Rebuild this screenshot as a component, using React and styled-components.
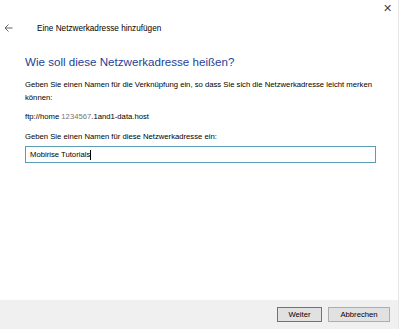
import React from "react";
import styled, { createGlobalStyle } from "styled-components";

const Global = createGlobalStyle`
  html, body { margin: 0; padding: 0; background: #fff; }
  body { font-family: "Liberation Sans", Arial, sans-serif; }
`;

const Window = styled.div`
  width: 399px;
  height: 329px;
  display: flex;
  flex-direction: column;
  background: #fff;
  box-sizing: border-box;
  border-right: 1px solid #e6e6e6;
`;

const TopBar = styled.div`
  height: 16px;
  display: flex;
  justify-content: flex-end;
  padding: 2px 6px 0 0;
`;

const Close = styled.span`
  font-size: 11px;
  color: #444;
  line-height: 12px;
`;

const Header = styled.div`
  display: flex;
  align-items: center;
  padding: 0 0 0 4px;
  height: 20px;
`;

const Back = styled.svg`
  width: 9px;
  height: 8px;
  margin-right: 24px;
`;

const Caption = styled.span`
  font-size: 8.2px;
  color: #000;
`;

const Body = styled.div`
  flex: 1;
  padding: 17px 22px 0 25px;
`;

const Heading = styled.h1`
  margin: 0 0 9px;
  font-weight: normal;
  font-size: 11.6px;
  color: #1e3f96;
  line-height: 14px;
`;

const Text = styled.p`
  margin: 0 0 ${(p) => p.$gap ?? 7}px;
  font-size: 7.7px;
  line-height: 13px;
  color: #000;
`;

const Grey = styled.span`
  color: #777;
`;

const Field = styled.div`
  height: 17px;
  border: 1px solid #5c9db6;
  box-sizing: border-box;
  display: flex;
  align-items: center;
  padding-left: 4px;
  font-size: 7.7px;
  color: #000;
`;

const Caret = styled.span`
  display: inline-block;
  width: 1px;
  height: 10px;
  background: #000;
`;

const Footer = styled.div`
  height: 29px;
  background: #f0f0f0;
  display: flex;
  justify-content: flex-end;
  align-items: center;
  gap: 6px;
  padding: 0 8px 0 0;
`;

const Button = styled.button`
  font-family: inherit;
  font-size: 7.7px;
  color: #000;
  height: 15px;
  width: ${(p) => p.$w}px;
  padding: 0;
  background: #e1e1e1;
  border: 1px solid ${(p) => (p.$primary ? "#3d80b6" : "#adadad")};
  border-radius: 0;
`;

export default function App() {
  return (
    <>
      <Global />
      <Window>
        <TopBar>
          <Close>✕</Close>
        </TopBar>
        <Header>
          <Back viewBox="0 0 9 8">
            <path d="M8.5 4H1M4.5 0.5L1 4l3.5 3.5" fill="none" stroke="#555" strokeWidth="0.9" />
          </Back>
          <Caption>Eine Netzwerkadresse hinzufügen</Caption>
        </Header>
        <Body>
          <Heading>Wie soll diese Netzwerkadresse heißen?</Heading>
          <Text $gap={6}>
            Geben Sie einen Namen für die Verknüpfung ein, so dass Sie sich die
            Netzwerkadresse leicht merken können:
          </Text>
          <Text $gap={7}>
            ftp://home <Grey>1234567</Grey>.1and1-data.host
          </Text>
          <Text $gap={3}>Geben Sie einen Namen für diese Netzwerkadresse ein:</Text>
          <Field>
            Mobirise Tutorials<Caret />
          </Field>
        </Body>
        <Footer>
          <Button $primary $w={45}>Weiter</Button>
          <Button $w={62}>Abbrechen</Button>
        </Footer>
      </Window>
    </>
  );
}
